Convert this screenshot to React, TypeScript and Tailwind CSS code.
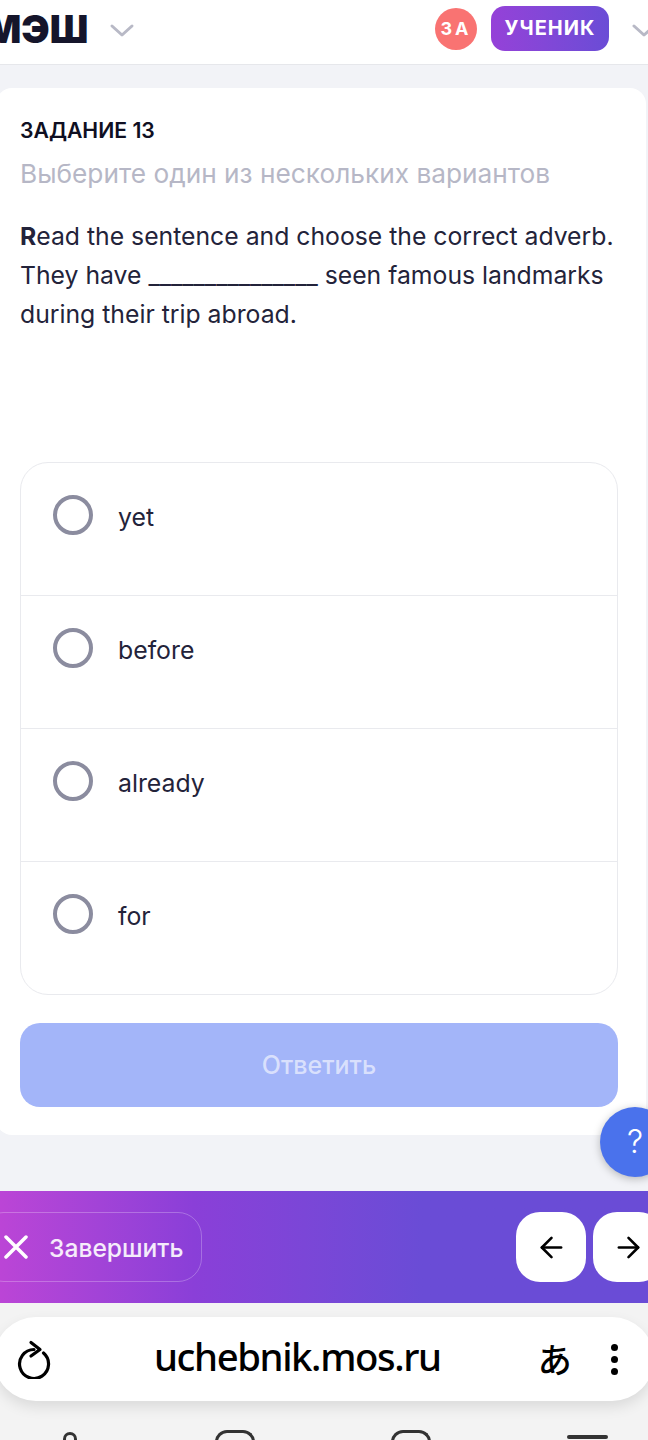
import { ArrowLeft, ArrowRight } from "lucide-react";

const options = ["yet", "before", "already", "for"];

function Chevron({ className }: { className: string }) {
  return (
    <svg viewBox="0 0 26 16" fill="none" className={`h-[16px] w-[26px] shrink-0 ${className}`}>
      <polyline points="3,3 13,12 23,3" stroke="#b8b9c6" strokeWidth="3" strokeLinecap="round" strokeLinejoin="round" />
    </svg>
  );
}

function Option({ label, last }: { label: string; last: boolean }) {
  return (
    <div className={`flex items-start gap-[25px] pl-[32px] pt-[32px] ${last ? "h-[132px]" : "h-[133px] border-b border-[#e9eaee]"}`}>
      <div className="h-[40px] w-[40px] rounded-full border-[4px] border-[#8b8c9f]" />
      <span className="pt-[6px] text-[24.8px] leading-[32px] text-[#23233a]">{label}</span>
    </div>
  );
}

export default function App() {
  return (
    <div className="relative h-[1440px] w-[648px] overflow-hidden bg-[#f2f3f7] font-['Inter',sans-serif]">
      <header className="flex h-[65px] items-start border-b border-[#e6e7eb] bg-white">
        <span className="ml-[-15px] mt-[8px] text-[38px] font-black leading-[42px] text-[#15152b]">МЭШ</span>
        <Chevron className="ml-[21px] mt-[23px]" />
        <div className="ml-auto mt-[8px] flex h-[42px] w-[42px] items-center justify-center rounded-full bg-[#f97372] pb-[2px] text-[18px] font-bold tracking-[3px] text-white">
          ЗА
        </div>
        <div className="ml-[14px] mt-[6px] flex h-[45px] w-[118px] items-center justify-center rounded-[14px] bg-gradient-to-r from-[#9541d8] to-[#6a4cd6] pb-[2px] text-[20px] font-bold tracking-[1px] text-white">
          УЧЕНИК
        </div>
        <Chevron className="ml-[22px] mr-[-9px] mt-[23px]" />
      </header>

      <main className="ml-[-4px] mt-[23px] h-[1047px] w-[650px] rounded-[16px] bg-white pl-[24px] pr-[28px] pt-[28px]">
        <h1 className="text-[21.2px] font-semibold leading-[28px] text-[#0f0f22]">ЗАДАНИЕ 13</h1>
        <p className="mt-[15px] text-[26.25px] leading-[30px] text-[#b6b7c6]">Выберите один из нескольких вариантов</p>
        <div className="mt-[28px] whitespace-nowrap text-[24.75px] leading-[39px] text-[#23233a]">
          <p><b className="font-bold">R</b>ead the sentence and choose the correct adverb.</p>
          <p>They have _______________ seen famous landmarks</p>
          <p>during their trip abroad.</p>
        </div>
        <div className="mt-[128px] overflow-hidden rounded-[28px] border border-[#e9eaee]">
          {options.map((o, i) => (
            <Option key={o} label={o} last={i === options.length - 1} />
          ))}
        </div>
        <button className="mt-[28px] flex h-[84px] w-full items-center justify-center rounded-[20px] bg-[#a3b5f9] pt-[2px] text-[25px] font-medium text-white/60">
          Ответить
        </button>
      </main>

      <div className="absolute left-[600px] top-[1107px] flex h-[70px] w-[70px] items-center justify-center rounded-full bg-[#4a72ec] text-[32px] font-light leading-none text-white shadow-[0_2px_8px_rgba(0,0,0,0.25)]">
        ?
      </div>

      <div className="mt-[56px] flex h-[112px] items-center bg-gradient-to-r from-[#bb45d6] via-[#8a3fd8] via-30% to-[#6a4cd6] to-65%">
        <div className="ml-[-20px] flex h-[70px] w-[222px] items-center rounded-[24px] border border-white/25 pl-[23px]">
          <svg viewBox="0 0 24 24" fill="none" className="h-[24px] w-[24px] shrink-0">
            <path d="M2 2 L22 22 M22 2 L2 22" stroke="white" strokeWidth="3.5" strokeLinecap="round" />
          </svg>
          <span className="ml-[21px] pt-[2px] text-[24.6px] font-medium text-white/90">Завершить</span>
        </div>
        <div className="ml-auto flex h-[70px] w-[70px] items-center justify-center rounded-[24px] bg-white">
          <ArrowLeft className="h-[33px] w-[33px] text-black" strokeWidth={1.9} />
        </div>
        <div className="ml-[7px] mr-[-15px] flex h-[70px] w-[70px] shrink-0 items-center justify-center rounded-[24px] bg-white">
          <ArrowRight className="h-[33px] w-[33px] text-black" strokeWidth={1.9} />
        </div>
      </div>

      <div className="h-[137px] bg-[#f3f3f3] pt-[14px]">
        <div className="ml-[-6px] flex h-[84px] w-[660px] items-center rounded-[42px] bg-white shadow-[0_6px_14px_rgba(0,0,0,0.1)]">
          <svg viewBox="0 0 40 40" fill="none" className="ml-[20px] h-[40px] w-[40px] shrink-0 text-black">
            <path d="M29.5 14 A14.5 14.5 0 1 1 20 10.5" stroke="currentColor" strokeWidth="3.2" strokeLinecap="round" />
            <path d="M17 3.5 L26 10.5 L17 17" stroke="currentColor" strokeWidth="3.2" strokeLinecap="round" strokeLinejoin="round" />
          </svg>
          <span className="ml-[100px] pb-[6px] font-['Noto_Sans',sans-serif] text-[38.3px] font-medium leading-[48px] tracking-[-1.4px] text-black">uchebnik.mos.ru</span>
          <span className="ml-[97px] shrink-0 font-['Noto_Sans_CJK_JP',sans-serif] text-[34px] font-medium leading-[40px] text-black">あ</span>
          <div className="ml-[39px] flex shrink-0 flex-col gap-[5px]">
            <div className="h-[7px] w-[7px] rounded-full bg-black" />
            <div className="h-[7px] w-[7px] rounded-full bg-black" />
            <div className="h-[7px] w-[7px] rounded-full bg-black" />
          </div>
        </div>
        <div className="mt-[29px] flex items-start">
          <div className="ml-[63px] mt-[2px] h-[16px] w-[14px] rounded-full border-[3px] border-[#333]" />
          <div className="ml-[138px] h-[20px] w-[40px] rounded-t-[12px] border-[3px] border-b-0 border-[#333]" />
          <div className="ml-[136px] h-[20px] w-[40px] rounded-t-[12px] border-[3px] border-b-0 border-[#333]" />
          <div className="ml-[136px] mt-[5px] h-[4px] w-[41px] rounded-full bg-[#333]" />
        </div>
      </div>
    </div>
  );
}
